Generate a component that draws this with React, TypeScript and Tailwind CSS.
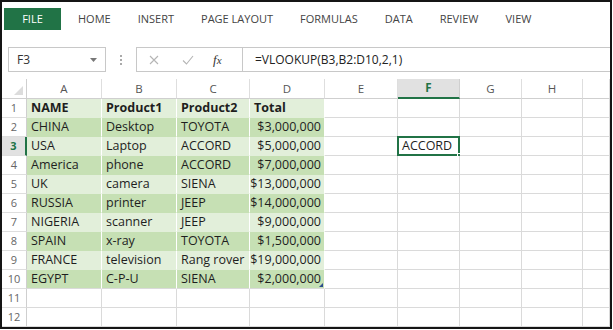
import React from "react";

const tabs = ["HOME", "INSERT", "PAGE LAYOUT", "FORMULAS", "DATA", "REVIEW", "VIEW"];
const cols = ["A", "B", "C", "D", "E", "F", "G", "H", ""];
const data: string[][] = [
  ["NAME", "Product1", "Product2", "Total"],
  ["CHINA", "Desktop", "TOYOTA", "$3,000,000"],
  ["USA", "Laptop", "ACCORD", "$5,000,000"],
  ["America", "phone", "ACCORD", "$7,000,000"],
  ["UK", "camera", "SIENA", "$13,000,000"],
  ["RUSSIA", "printer", "JEEP", "$14,000,000"],
  ["NIGERIA", "scanner", "JEEP", "$9,000,000"],
  ["SPAIN", "x-ray", "TOYOTA", "$1,500,000"],
  ["FRANCE", "television", "Rang rover", "$19,000,000"],
  ["EGYPT", "C-P-U", "SIENA", "$2,000,000"],
];

export default function App() {
  const font = { fontFamily: '"Open Sans", "Noto Sans", sans-serif' };
  return (
    <div className="w-[613px] h-[330px] bg-white overflow-hidden" style={font}>
      <div className="w-[612px] h-[329px] border-2 border-[#151515] flex flex-col overflow-hidden">
        {/* Ribbon tabs */}
        <div className="flex items-center h-[22px] mt-[6px] pl-[2px] text-[11px] text-[#444]">
          <div className="w-[57px] h-[22px] bg-[#217346] text-white flex items-center justify-center">FILE</div>
          <div className="flex items-center gap-[27px] ml-[17px] pt-[1px]">
            {tabs.map((t) => (
              <span key={t}>{t}</span>
            ))}
          </div>
        </div>
        {/* Formula bar */}
        <div className="flex items-stretch h-[25px] mt-[17px]">
          <div className="ml-[6px] w-[98px] border border-[#c8c8c8] flex items-center justify-between pl-[8px] pr-[8px] text-[12px] text-[#333]">
            <span>F3</span>
            <svg width="7" height="4" viewBox="0 0 7 4"><path d="M0 0 L7 0 L3.5 4 Z" fill="#777" /></svg>
          </div>
          <div className="w-[30px] flex flex-col items-center justify-center gap-[2px]">
            <span className="w-[2px] h-[2px] bg-[#aaa]" />
            <span className="w-[2px] h-[2px] bg-[#aaa]" />
            <span className="w-[2px] h-[2px] bg-[#aaa]" />
          </div>
          <div className="w-[107px] border border-[#c8c8c8] flex items-center">
            <svg className="ml-[12px]" width="10" height="10" viewBox="0 0 10 10">
              <path d="M1 1 L9 9 M9 1 L1 9" stroke="#b5b5b5" strokeWidth="1.1" />
            </svg>
            <svg className="ml-[23px]" width="12" height="10" viewBox="0 0 12 10">
              <path d="M1 5.5 L4.5 9 L11 1" stroke="#b5b5b5" strokeWidth="1.1" fill="none" />
            </svg>
            <span className="ml-[19px] text-[13px] italic text-[#333]" style={{ fontFamily: '"Liberation Serif", serif' }}>
              f<span className="text-[11px]">x</span>
            </span>
          </div>
          <div className="flex-1 border-t border-b border-[#c8c8c8] flex items-center pl-[12px] text-[12px] text-[#222]">
            =VLOOKUP(B3,B2:D10,2,1)
          </div>
        </div>
        {/* Grid */}
        <div className="mt-[7px] grid grid-cols-[25px_75px_75px_73px_75px_73px_62px_62px_61px_1fr] grid-rows-[20px_repeat(12,19px)] text-[12.5px] text-[#1e1e1e]">
          <div className="relative border-r border-b border-[#cfcfcf] bg-white">
            <svg className="absolute right-[3px] bottom-[3px]" width="9" height="9" viewBox="0 0 9 9">
              <path d="M9 0 L9 9 L0 9 Z" fill="#dcdcdc" />
            </svg>
          </div>
          {cols.map((c, i) => {
            const sel = c === "F";
            return (
              <div
                key={"h" + i}
                className={
                  "flex items-center justify-center text-[11.5px] border-r " +
                  (sel
                    ? "bg-[#e1e1e1] border-r-[#cfcfcf] border-b-2 border-b-[#217346] text-[#217346] font-bold"
                    : "bg-white border-[#dedede] border-b border-b-[#cfcfcf] text-[#555]")
                }
              >
                {c}
              </div>
            );
          })}
          {Array.from({ length: 12 }).map((_, r) => {
            const rowNum = r + 1;
            const rowSel = rowNum === 3;
            const green = rowNum <= 10;
            const bg = rowNum % 2 === 0 ? "bg-[#c6e0b4]" : "bg-[#e2efda]";
            return (
              <React.Fragment key={"r" + r}>
                <div
                  className={
                    "flex items-center justify-center text-[11px] border-b border-[#dedede] " +
                    (rowSel
                      ? "bg-[#e1e1e1] text-[#217346] font-bold border-r-2 border-r-[#217346]"
                      : "bg-white text-[#666] border-r border-r-[#cfcfcf]")
                  }
                >
                  {rowNum}
                </div>
                {cols.map((_, ci) => {
                  if (green && ci < 4) {
                    const txt = data[r][ci];
                    const bottom = rowNum === 10 ? "border-b-[#dadada]" : "border-b-transparent";
                    return (
                      <div
                        key={ci}
                        className={
                          "relative flex items-center whitespace-nowrap border-r border-r-white border-b " +
                          bottom +
                          " " +
                          bg +
                          (ci === 3 && rowNum > 1 ? " justify-end pr-[3px]" : " pl-[4px]") +
                          (rowNum === 1 ? " font-bold" : "")
                        }
                      >
                        {txt}
                        {ci === 3 && rowNum === 10 && (
                          <svg className="absolute right-[1px] bottom-[1px]" width="4" height="4" viewBox="0 0 4 4">
                            <path d="M4 0 L4 4 L0 4 Z" fill="#2b4c8c" />
                          </svg>
                        )}
                      </div>
                    );
                  }
                  const isSel = rowNum === 3 && ci === 5;
                  return (
                    <div
                      key={ci}
                      className={
                        "relative flex items-center border-r border-b border-[#dadada] bg-white " +
                        (isSel ? "pl-[4px]" : "")
                      }
                    >
                      {isSel && (
                        <>
                          <div className="absolute left-[-1px] top-[-1px] right-[-1px] bottom-[-1px] border-2 border-[#217346]" />
                          <span className="relative">ACCORD</span>
                          <div className="absolute right-[-4px] bottom-[-4px] w-[6px] h-[6px] bg-[#217346] border border-white" />
                        </>
                      )}
                    </div>
                  );
                })}
              </React.Fragment>
            );
          })}
        </div>
      </div>
    </div>
  );
}
